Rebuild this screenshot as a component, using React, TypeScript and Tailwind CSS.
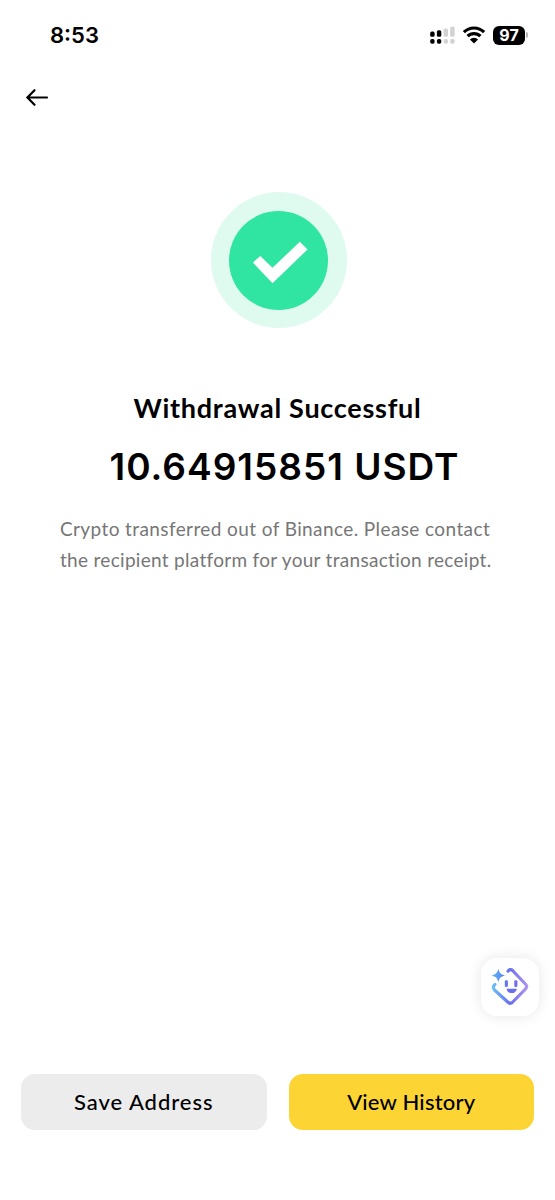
const bars = [
  { x: 8.2, y: 16.5, h: 5.3, on: true },
  { x: 14.9, y: 15.2, h: 6.6, on: true },
  { x: 21.6, y: 13.5, h: 8.3, on: false },
  { x: 28.2, y: 11.5, h: 10.3, on: false },
];

function SignalIcon() {
  return (
    <svg width="40" height="40" viewBox="0 0 40 40" className="shrink-0">
      {bars.map(bar => (
        <g key={bar.x} fill={bar.on ? '#000' : '#d2d2d2'}>
          <rect x={bar.x} y={bar.y} width="4.4" height={bar.h} rx="1.6" />
          <rect x={bar.x} y="24" width="4.4" height="4.8" rx="1.8" />
        </g>
      ))}
    </svg>
  );
}

function WifiIcon() {
  return (
    <svg width="24" height="18" viewBox="0 0 24 18" className="shrink-0">
      <g fill="none" stroke="#000" strokeWidth="3.2">
        <path d="M1.9 6.2a14.2 14.2 0 0 1 20.2 0" />
        <path d="M5.6 10.2a9 9 0 0 1 12.8 0" />
      </g>
      <path d="M12 17.6 7.9 13.4a5.9 5.9 0 0 1 8.2 0z" />
    </svg>
  );
}

function Battery({ level }: { level: number }) {
  return (
    <div className="flex items-center gap-[1px]">
      <span className="flex h-[19px] w-8 items-center justify-center rounded-[6px] bg-black font-['Inter',sans-serif] text-[16px] leading-none font-bold text-white">
        {level}
      </span>
      <span className="h-[6px] w-[2px] rounded-r-full bg-[#b5b5b5]" />
    </div>
  );
}

function StatusBar() {
  return (
    <div className="flex h-[70px] items-center justify-between pr-[27px] pl-[50px]">
      <span className="font-['Inter',sans-serif] text-[22px] leading-none font-semibold">8:53</span>
      <div className="flex items-center">
        <SignalIcon />
        <WifiIcon />
        <div className="ml-[7px]">
          <Battery level={97} />
        </div>
      </div>
    </div>
  );
}

function SuccessBadge() {
  return (
    <div className="ml-[2px] flex size-[136px] items-center justify-center rounded-full bg-[#dffbef]">
      <svg width="99" height="99" viewBox="0 0 99 99">
        <circle cx="49.5" cy="49.5" r="49.5" fill="#2fe5a1" />
        <path d="M23.8 51.5 31.3 44.9 43.5 56.8 70.8 30.8 78.5 38.5 43.5 72.2z" fill="#fff" />
      </svg>
    </div>
  );
}

function AssistantButton() {
  return (
    <button
      aria-label="Assistant"
      className="absolute top-[958px] right-4 flex size-[58px] items-center justify-center rounded-2xl bg-white shadow-[0_0_14px_rgba(0,0,0,0.10)]"
    >
      <svg width="58" height="58" viewBox="0 0 58 58">
        <defs>
          <linearGradient id="frame" gradientUnits="userSpaceOnUse" x1="11" y1="30" x2="47" y2="30">
            <stop offset="0" stopColor="#69c5f5" />
            <stop offset="0.5" stopColor="#6c6fee" />
            <stop offset="1" stopColor="#b296f4" />
          </linearGradient>
          <linearGradient id="spark" x1="0" y1="0" x2="1" y2="0">
            <stop offset="0" stopColor="#63b2f7" />
            <stop offset="1" stopColor="#5583f3" />
          </linearGradient>
        </defs>
        <path
          d="M27 13.2c1-1.9 3.2-2.1 4.6-.7L44.4 26c1.6 1.7 1.6 3.5 0 5.1L31.8 44c-1.6 1.6-3.5 1.6-5.1 0L13.7 32.2c-1.9-1.8-1.9-4.2.2-5.7"
          fill="none"
          stroke="url(#frame)"
          strokeWidth="3.2"
          strokeLinecap="round"
        />
        <path d="M17.3 10.8c1.1 4.4 2.3 5.6 6.7 6.7-4.4 1.1-5.6 2.3-6.7 6.7-1.1-4.4-2.3-5.6-6.7-6.7 4.4-1.1 5.6-2.3 6.7-6.7z" fill="url(#spark)" />
        <rect x="23.8" y="22.3" width="3.1" height="6.7" rx="1.3" fill="#6474ee" />
        <rect x="33.3" y="22.3" width="3.1" height="6.7" rx="1.3" fill="#716bed" />
        <path d="M25.5 30.7h10.4c-.5 3-2.5 4.4-5.2 4.4s-4.7-1.4-5.2-4.4z" fill="#6b6dec" />
      </svg>
    </button>
  );
}

export default function App() {
  return (
    <div className="relative flex h-[1200px] w-[555px] flex-col overflow-hidden bg-white font-['Lato',sans-serif] text-black">
      <StatusBar />

      <header className="flex h-[54px] items-center pl-[25px]">
        <button aria-label="Back">
          <svg width="24" height="20" viewBox="0 0 24 20" fill="none" stroke="#000" strokeWidth="2.2" strokeLinecap="round">
            <path d="M22 10.5H3M9.5 3.2 2.4 10.5 9.5 17.8" />
          </svg>
        </button>
      </header>

      <main className="flex flex-1 flex-col items-center pt-[68px]">
        <SuccessBadge />
        <h1 className="mt-[61px] text-[27px] leading-[38px] font-bold tracking-[0.72px] whitespace-nowrap">
          Withdrawal Successful
        </h1>
        <p className="mt-5 ml-[14px] font-['Inter',sans-serif] text-[37px] leading-[40px] font-semibold tracking-[1px] whitespace-nowrap">
          10.64915851 USDT
        </p>
        <p className="mt-[26px] mr-1 w-[431px] text-[19px] leading-[31px] tracking-[0.3px] whitespace-nowrap text-[#767676]">
          <span className="tracking-[0.4px]">Crypto transferred out of Binance. Please contact</span>
          <br />
          the recipient platform for your transaction receipt.
        </p>
      </main>

      <footer className="flex gap-[22px] px-[21px] pb-[70px]">
        <button className="h-[56px] flex-1 rounded-[14px] bg-[#ececec] pb-[2px] text-[22px] font-medium tracking-[0.95px]">
          Save Address
        </button>
        <button className="h-[56px] flex-1 rounded-[14px] bg-[#fcd535] pb-[2px] text-[22px] font-medium tracking-[0.2px]">
          View History
        </button>
      </footer>

      <AssistantButton />
    </div>
  );
}
